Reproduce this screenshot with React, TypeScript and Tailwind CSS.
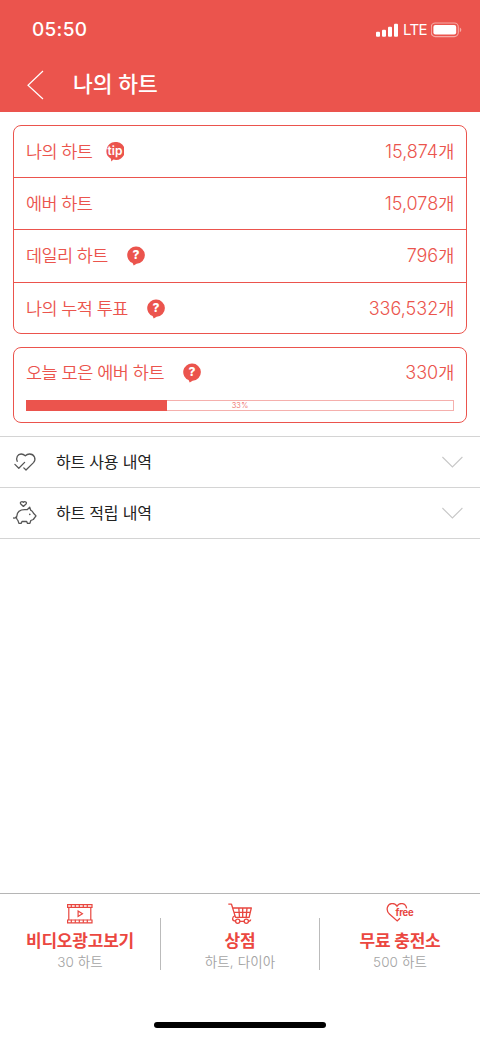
import React from 'react';

const HEARTS = [
  { label: '나의 하트', value: '15,874', badge: 'tip', height: 'h-[51px]', gap: 'ml-[14px]' },
  { label: '에버 하트', value: '15,078', badge: '', height: 'h-[52px]', gap: '' },
  { label: '데일리 하트', value: '796', badge: '?', height: 'h-[53px]', gap: 'ml-[19px]' },
  { label: '나의 누적 투표', value: '336,532', badge: '?', height: 'h-[52px]', gap: 'ml-[19px]' },
];

function Badge({ text }: { text: string }) {
  const tip = text === 'tip';
  return (
    <svg width="18" height="20" viewBox="0 0 18 20" className="block">
      <path
        d={tip ? 'M9 0a9 9 0 1 1-1.6 17.6L5.2 19.6 5 16.8A9 9 0 0 1 9 0Z' : 'M9 .6a8.5 8.5 0 1 1 .6 17.1L6.7 19.6 5.6 17A8.5 8.5 0 0 1 9 .6Z'}
        fill="#eb544d"
      />
      <text
        x="9"
        y="13.2"
        textAnchor="middle"
        fill="#fff"
        fontFamily="Inter, sans-serif"
        fontWeight={tip ? 600 : 800}
        fontSize="12"
      >
        {text}
      </text>
    </svg>
  );
}

function Amount({ value }: { value: string }) {
  return (
    <span className="ml-auto flex items-baseline">
      <span className="text-[18px]">{value}</span>
      <span className="text-[17.5px] tracking-[-0.3px]">개</span>
    </span>
  );
}

function StatusBar() {
  return (
    <div className="flex h-[60px] items-center justify-between pl-[32px] pr-[18px]">
      <span className="text-[19px] font-medium leading-6 tracking-[0.3px]">05:50</span>
      <div className="flex items-center">
        <svg width="23" height="15" viewBox="0 0 23 15" fill="#fff">
          <rect x="0" y="8.7" width="4" height="5" rx="1" />
          <rect x="6" y="6.7" width="4" height="7" rx="1" />
          <rect x="12" y="3.7" width="4" height="10" rx="1" />
          <rect x="18" y="0.7" width="4" height="13" rx="1" />
        </svg>
        <span className="ml-[4px] w-[24px] text-[15px] leading-5 tracking-[-0.6px]">LTE</span>
        <svg width="31" height="16" viewBox="0 0 31 16" className="ml-[4px]">
          <rect x="0.3" y="1" width="27" height="13.6" rx="4" fill="none" stroke="#f6aaa6" strokeWidth="1.1" />
          <rect x="2.4" y="3" width="22.8" height="9.6" rx="2" fill="#fff" />
          <path d="M28.8 5.5c2 .8 2 3.8 0 4.6Z" fill="#f6aaa6" />
        </svg>
      </div>
    </div>
  );
}

function UseIcon() {
  return (
    <svg width="26" height="26" viewBox="0 0 26 26" fill="none" stroke="#555" strokeWidth="1.3" strokeLinecap="round" strokeLinejoin="round">
      <path d="M5.2 12.3C3.8 8.6 5.6 5 9.1 5c1.7 0 3 .6 4.2 1.7C14.5 5.6 15.8 5 17.5 5c4.9 0 7 5 4 8.6L14 21l-2.2-2.1" />
      <path d="m2.9 15.4 3.9 3.8 5.8-5.8" />
    </svg>
  );
}

function SaveIcon() {
  return (
    <svg width="26" height="26" viewBox="0 0 26 26" fill="none" stroke="#555" strokeWidth="1.3" strokeLinecap="round" strokeLinejoin="round">
      <path d="M11.4 6.4 8.8 4C7.4 2.4 9.8.7 11.4 2.3 13 .7 15.4 2.4 14 4Z" />
      <path d="M1.6 18c1.8.2 2.8-.4 3.2-1.8.4-4.6 3.6-6.5 7.9-6.5h2.5L17.7 7.2l1 3c1.4.7 2.3 1.9 2.8 3.1l2.5 2.6-2.7 3.6-2.5 1-.9 2.9h-2.4l-.8-1.9H10l-.9 1.9H6.9l-1-3c-1-.8-1.5-2-1.6-3.9" />
      <circle cx="17.8" cy="14.4" r="0.8" fill="#555" stroke="none" />
    </svg>
  );
}

function HistoryRow({ icon, label }: { icon: React.ReactNode; label: string }) {
  return (
    <div className="flex h-[51px] items-center border-b border-[#d4d4d4] pl-[12px] pr-[17px]">
      {icon}
      <span className="ml-[18px] text-[16px] leading-6 tracking-[-0.2px] text-[#222]">{label}</span>
      <svg width="22" height="12" viewBox="0 0 22 12" fill="none" stroke="#c8c8c8" strokeWidth="1.1" className="ml-auto">
        <path d="m1.4 1 10 10 10-10" />
      </svg>
    </div>
  );
}

function FilmIcon() {
  return (
    <svg width="28" height="22" viewBox="0 0 28 22" fill="none" stroke="#e8463f" strokeWidth="1.2">
      <path d="M1.6 1.6h24.4v2.8H1.6zM1.6 17h24.4v2.8H1.6zM2.8 4.4V17M24.8 4.4V17" />
      <path d="M5.3 1.8v3M9.3 1.8v3M13.3 1.8v3M17.3 1.8v3M21.3 1.8v3M5.3 16.8v3M9.3 16.8v3M13.3 16.8v3M17.3 16.8v3M21.3 16.8v3" />
      <path d="m12.1 8 4.3 2.7-4.3 2.7Z" />
    </svg>
  );
}

function CartIcon() {
  return (
    <svg width="28" height="22" viewBox="0 0 28 22" fill="none" stroke="#e8463f" strokeWidth="1.3" strokeLinejoin="round">
      <path d="M2.3 1.2h3.2l4 13.2h13.6L25.3 5H7M8.2 9.4h16.1M12.8 5l.7 9.4M16.7 5v9.4M21 5l-.8 9.4" />
      <path d="M9.1 12.5c-3.5 1.8-3.4 5.4.5 5.7M13.9 18.3h4.3M22.5 18.3c1.6 0 2.1-.7 2.1-1.7" />
      <circle cx="11.7" cy="18.2" r="2.1" />
      <circle cx="20.3" cy="18.2" r="2.1" />
    </svg>
  );
}

function FreeIcon() {
  return (
    <svg width="28" height="22" viewBox="0 0 28 22">
      <path
        d="M20.6 5.4C19.8-.2 13.6-1 11 3.2 8.4-1 2.6-.1 1.4 4.4c-.7 2.8.2 4.9 2 6.5l7.8 7 2.8-2.7"
        fill="none"
        stroke="#e8463f"
        strokeWidth="1.3"
      />
      <text x="9.6" y="13" fill="#e8463f" fontFamily="Inter, sans-serif" fontSize="9.5" fontWeight="700" textLength="18">
        free
      </text>
    </svg>
  );
}

const TABS = [
  { title: '비디오광고보기', sub: '30 하트', icon: <FilmIcon /> },
  { title: '상점', sub: '하트, 다이아', icon: <CartIcon /> },
  { title: '무료 충전소', sub: '500 하트', icon: <FreeIcon /> },
];

export default function App() {
  const percent = 33;

  return (
    <div className="flex h-[1039px] w-[480px] flex-col overflow-hidden bg-white font-['Inter','Noto_Sans_CJK_KR',sans-serif]">
      <header className="h-[112px] shrink-0 bg-[#eb544d] text-white">
        <StatusBar />
        <div className="flex h-[50px] items-center pl-[27px]">
          <svg width="17" height="30" viewBox="0 0 17 30" fill="none" stroke="#fff" strokeWidth="1.2">
            <path d="M16 1 1 15.2 16 29" />
          </svg>
          <h1 className="-mt-[3px] ml-[29px] text-[21.5px] font-medium leading-8">나의 하트</h1>
        </div>
      </header>

      <main className="flex-1 pt-[13px]">
        <section className="mx-[13px] h-[209px] rounded-[8px] border border-[#eb544d] font-[350] text-[#eb544d]">
          {HEARTS.map((h, i) => (
            <div
              key={h.label}
              className={`flex ${h.height} items-center px-[12px] ${i > 0 ? 'border-t border-[#eb544d]' : ''}`}
            >
              <span className="pt-px text-[17.5px] tracking-[-0.6px]">{h.label}</span>
              {h.badge && <span className={h.gap}><Badge text={h.badge} /></span>}
              <Amount value={h.value} />
            </div>
          ))}
        </section>

        <section className="mx-[13px] mt-[13px] h-[76px] rounded-[8px] border border-[#eb544d] px-[12px] font-[350] text-[#eb544d]">
          <div className="flex h-[49px] items-center">
            <span className="pt-px text-[17.5px] tracking-[-0.5px]">오늘 모은 에버 하트</span>
            <span className="ml-[19px]"><Badge text="?" /></span>
            <Amount value="330" />
          </div>
          <div className="relative mt-[3px] h-[11px] border border-[#f5b0ad]">
            <div className="-ml-px -mt-px h-[11px] bg-[#eb544d]" style={{ width: `${percent}%` }} />
            <span className="absolute inset-0 text-center text-[7.5px] leading-[10px] tracking-[0.2px]">{percent}%</span>
          </div>
        </section>

        <section className="mt-[13px] border-t border-[#d4d4d4]">
          <HistoryRow icon={<UseIcon />} label="하트 사용 내역" />
          <HistoryRow icon={<SaveIcon />} label="하트 적립 내역" />
        </section>
      </main>

      <footer className="h-[146px] shrink-0 border-t border-[#b5b5b5]">
        <div className="grid grid-cols-[161px_159px_160px]">
          {TABS.map((t, i) => (
            <div key={t.title} className="flex h-[76px] items-end">
              <div className="flex h-[67px] flex-1 flex-col items-center">
                <div className="h-[22px] shrink-0">{t.icon}</div>
                <span className="mt-[5px] text-[17px] font-bold leading-[22px] tracking-[-0.2px] text-[#eb4740]">{t.title}</span>
                <span className="text-[13.5px] font-[350] leading-[20px] tracking-[0.1px] text-[#a4a4a4]">{t.sub}</span>
              </div>
              {i < 2 && <div className="h-[52px] w-px bg-[#bbb]" />}
            </div>
          ))}
        </div>
        <div className="mx-auto mt-[52px] h-[6px] w-[172px] rounded-full bg-black" />
      </footer>
    </div>
  );
}
